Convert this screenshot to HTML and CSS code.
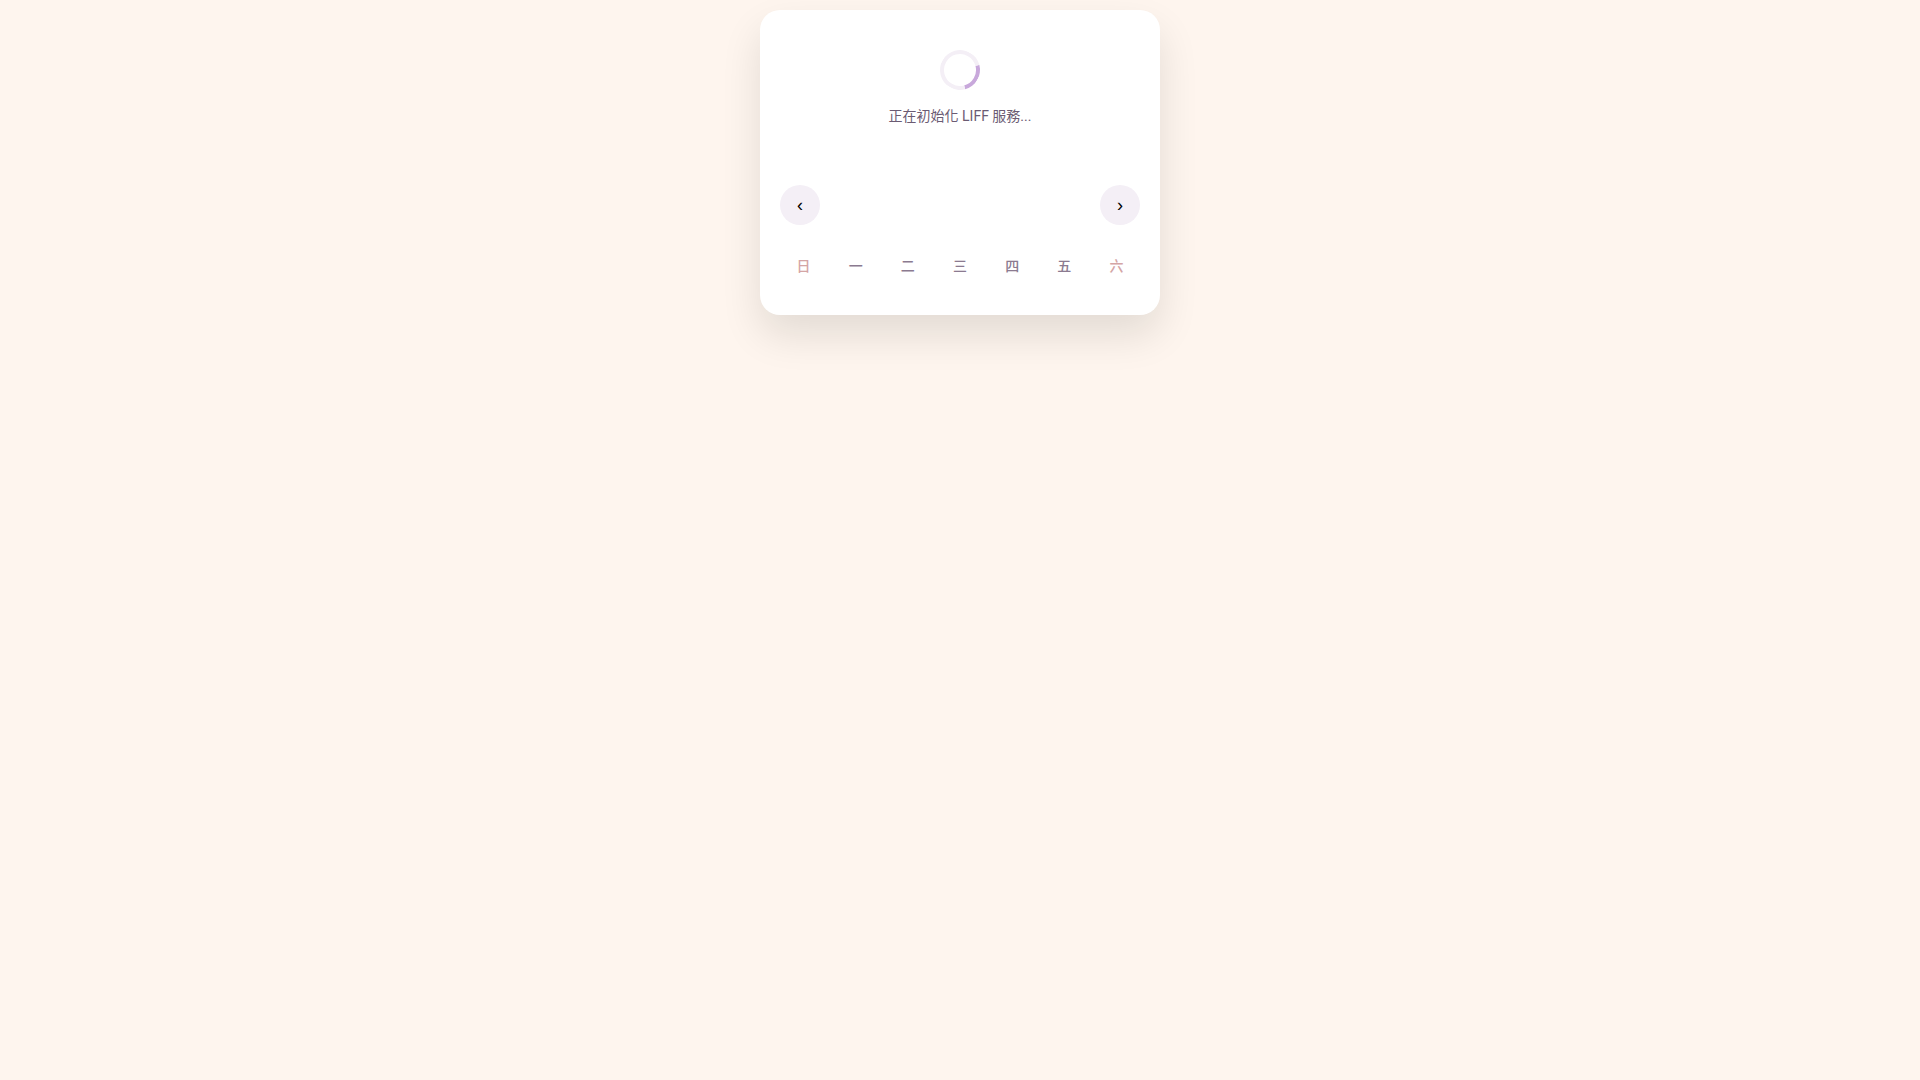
FILE: index.html
```html
<!DOCTYPE html>
<html lang="zh-Hant">
<head>
<meta charset="utf-8">
<meta name="viewport" content="width=device-width, initial-scale=1">
<title>LIFF</title>
<link rel="stylesheet" href="styles.css">
</head>
<body>
<main class="card">
  <div class="loading" role="status">
    <div class="spinner"></div>
    <p class="loading-text">正在初始化 LIFF 服務...</p>
  </div>
  <div class="calendar-header">
    <button class="nav-button" type="button" aria-label="上個月">‹</button>
    <button class="nav-button" type="button" aria-label="下個月">›</button>
  </div>
  <div class="weekdays">
    <div class="weekday weekend">日</div>
    <div class="weekday">一</div>
    <div class="weekday">二</div>
    <div class="weekday">三</div>
    <div class="weekday">四</div>
    <div class="weekday">五</div>
    <div class="weekday weekend">六</div>
  </div>
</main>
</body>
</html>
```
FILE: styles.css
```css
* {
  box-sizing: border-box;
}

body {
  margin: 0;
  padding: 10px;
  min-height: 100vh;
  background: #fef5ee;
  color: #6b5b73;
  font-family: Roboto, "Noto Sans CJK TC", sans-serif;
}

.card {
  max-width: 400px;
  margin: 0 auto;
  background: #fff;
  border-radius: 20px;
  box-shadow: 0 20px 40px rgba(10, 20, 10, 0.11);
  overflow: hidden;
}

.loading {
  padding: 40px 40px 38px;
  text-align: center;
}

.spinner {
  width: 40px;
  height: 40px;
  margin: 0 auto 15px;
  border: 4px solid #f4eff6;
  border-top-color: #c8a8db;
  border-radius: 50%;
  transform: rotate(120deg);
}

.loading-text {
  margin: 0;
  font-size: 14px;
  line-height: 22px;
}

.calendar-header {
  display: flex;
  justify-content: space-between;
  padding: 20px;
}

.nav-button {
  width: 40px;
  height: 40px;
  padding: 0;
  border: 0;
  border-radius: 50%;
  background: #f4eff6;
  color: #000;
  font-family: "Liberation Sans", Arial, sans-serif;
  font-size: 18px;
  line-height: 20px;
  cursor: pointer;
}

.weekdays {
  display: grid;
  grid-template-columns: repeat(7, 1fr);
  gap: 5px;
  padding: 0 20px 28px;
}

.weekday {
  padding: 10px 0;
  color: #8b7a90;
  font-size: 14px;
  font-weight: 500;
  line-height: 22px;
  text-align: center;
}

.weekend {
  color: #d4a5a5;
}
```
